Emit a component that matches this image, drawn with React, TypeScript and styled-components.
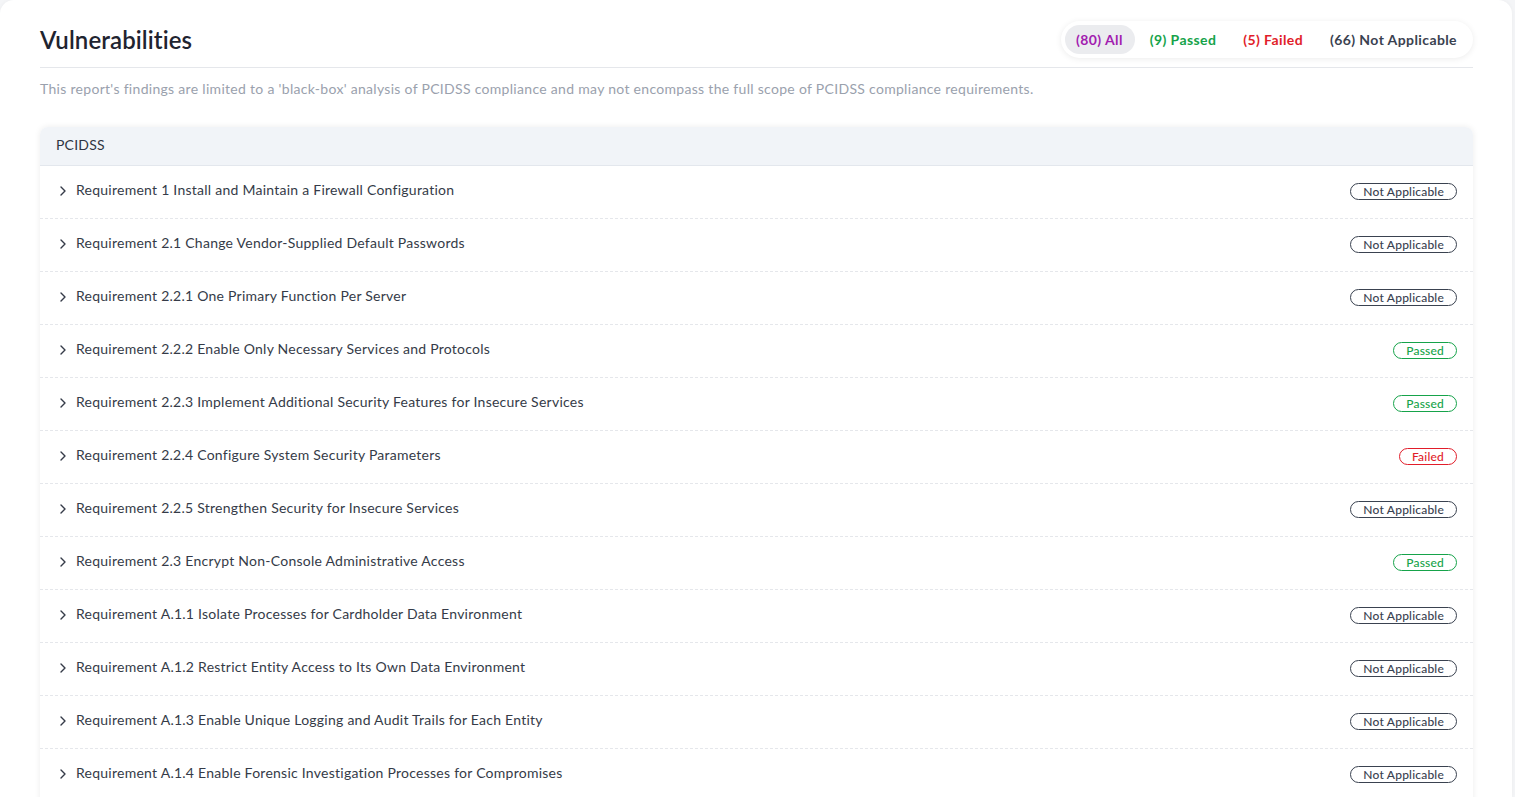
import React from "react";
import styled, { createGlobalStyle } from "styled-components";

const Global = createGlobalStyle`
  html, body { margin: 0; padding: 0; background: #f4f5f7; }
  body { font-family: Lato, "Noto Sans", sans-serif; overflow: hidden; }
  * { box-sizing: border-box; }
`;

const Page = styled.div`
  display: flex;
  padding-right: 3px;
  height: 797px;
`;

const Card = styled.main`
  flex: 1;
  background: #fff;
  border-radius: 14px 14px 0 0;
  padding: 21px 39px 0 40px;
  box-shadow: 0 0 4px rgba(0, 0, 0, 0.04);
`;

const HeaderRow = styled.div`
  display: flex;
  align-items: center;
  justify-content: space-between;
  padding-bottom: 9px;
  border-bottom: 1px solid #e5e7eb;
`;

const Title = styled.h1`
  margin: 0;
  font-size: 24px;
  font-weight: 600;
  color: #1f2430;
  letter-spacing: 0.1px;
`;

const FilterPill = styled.div`
  display: flex;
  align-items: center;
  gap: 4px;
  padding: 4px;
  background: #fff;
  border-radius: 999px;
  box-shadow: 0 1px 6px rgba(0, 0, 0, 0.08);
`;

const FilterItem = styled.button<{ $color: string; $active?: boolean }>`
  border: none;
  font-family: inherit;
  font-size: 14px;
  font-weight: 700;
  letter-spacing: 0.4px;
  color: ${(p) => p.$color};
  background: ${(p) => (p.$active ? "#ebecef" : "transparent")};
  border-radius: 999px;
  padding: 6px 12px 6px 11px;
  cursor: pointer;
`;

const Note = styled.p`
  margin: 12px 0 0;
  font-size: 14px;
  letter-spacing: 0.3px;
  color: #9aa1ad;
`;

const Table = styled.section`
  margin-top: 30px;
  border-radius: 8px 8px 0 0;
  box-shadow: 0 0 6px rgba(0, 0, 0, 0.08);
  overflow: hidden;
`;

const TableHead = styled.div`
  height: 39px;
  display: flex;
  align-items: center;
  padding: 0 0 3px 16px;
  background: #f1f4f8;
  border-bottom: 1px solid #e3e7ed;
  font-size: 14px;
  letter-spacing: 0.2px;
  color: #2f3542;
`;

const Row = styled.div`
  height: 53px;
  display: flex;
  align-items: center;
  padding: 0 16px 0 18px;
  border-bottom: 1px dashed #e5e7eb;
  background: #fff;
`;

const Chevron = styled.svg`
  width: 10px;
  height: 12px;
  flex: none;
  margin-right: 8px;
  margin-top: -2px;
`;

const RowLabel = styled.span`
  flex: 1;
  font-size: 14px;
  letter-spacing: 0.25px;
  color: #353b48;
  margin-top: -5px;
`;

const tones = {
  na: "#3a4250",
  passed: "#16a34a",
  failed: "#e11d2a",
} as const;

type Status = keyof typeof tones;

const Badge = styled.span<{ $tone: Status }>`
  display: inline-flex;
  align-items: center;
  height: 17px;
  padding: 0 12px;
  border: 1px solid ${(p) => tones[p.$tone]};
  color: ${(p) => tones[p.$tone]};
  border-radius: 999px;
  font-size: 12px;
  font-weight: 500;
  letter-spacing: 0.2px;
  margin-top: -1px;
`;

const labels: Record<Status, string> = {
  na: "Not Applicable",
  passed: "Passed",
  failed: "Failed",
};

const rows: [string, Status][] = [
  ["Requirement 1 Install and Maintain a Firewall Configuration", "na"],
  ["Requirement 2.1 Change Vendor-Supplied Default Passwords", "na"],
  ["Requirement 2.2.1 One Primary Function Per Server", "na"],
  ["Requirement 2.2.2 Enable Only Necessary Services and Protocols", "passed"],
  ["Requirement 2.2.3 Implement Additional Security Features for Insecure Services", "passed"],
  ["Requirement 2.2.4 Configure System Security Parameters", "failed"],
  ["Requirement 2.2.5 Strengthen Security for Insecure Services", "na"],
  ["Requirement 2.3 Encrypt Non-Console Administrative Access", "passed"],
  ["Requirement A.1.1 Isolate Processes for Cardholder Data Environment", "na"],
  ["Requirement A.1.2 Restrict Entity Access to Its Own Data Environment", "na"],
  ["Requirement A.1.3 Enable Unique Logging and Audit Trails for Each Entity", "na"],
  ["Requirement A.1.4 Enable Forensic Investigation Processes for Compromises", "na"],
];

export default function App() {
  return (
    <>
      <Global />
      <Page>
        <Card>
          <HeaderRow>
            <Title>Vulnerabilities</Title>
            <FilterPill>
              <FilterItem $color="#a21caf" $active>(80) All</FilterItem>
              <FilterItem $color="#16a34a">(9) Passed</FilterItem>
              <FilterItem $color="#e11d2a">(5) Failed</FilterItem>
              <FilterItem $color="#3a4250">(66) Not Applicable</FilterItem>
            </FilterPill>
          </HeaderRow>
          <Note>
            This report's findings are limited to a 'black-box' analysis of PCIDSS compliance and may not encompass the full scope of PCIDSS compliance requirements.
          </Note>
          <Table>
            <TableHead>PCIDSS</TableHead>
            {rows.map(([label, status]) => (
              <Row key={label}>
                <Chevron viewBox="0 0 10 12">
                  <path d="M3 2 L7 6 L3 10" fill="none" stroke="#353b48" strokeWidth="1.4" strokeLinecap="round" strokeLinejoin="round" />
                </Chevron>
                <RowLabel>{label}</RowLabel>
                <Badge $tone={status}>{labels[status]}</Badge>
              </Row>
            ))}
          </Table>
        </Card>
      </Page>
    </>
  );
}
